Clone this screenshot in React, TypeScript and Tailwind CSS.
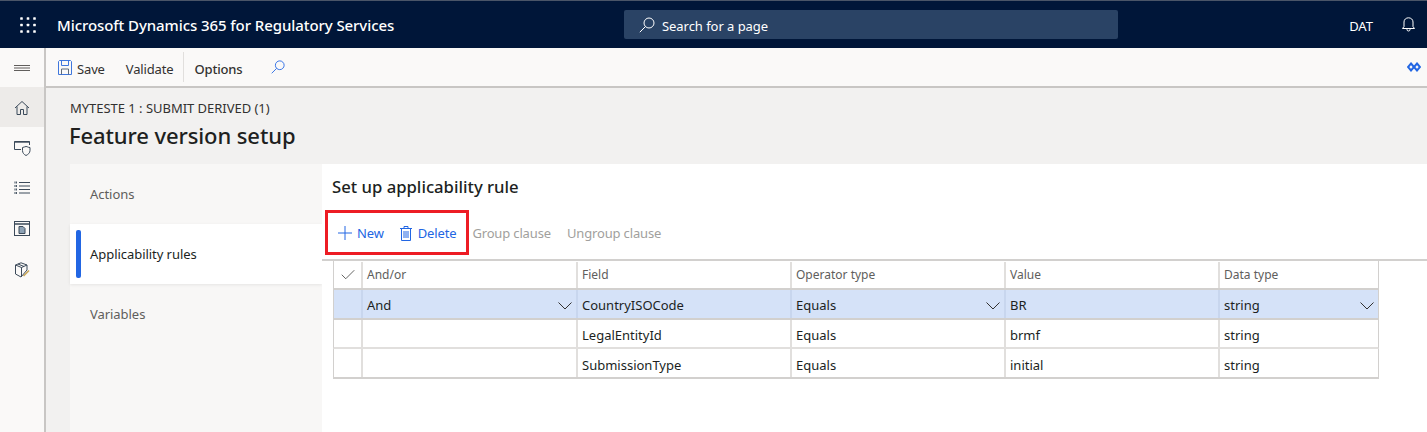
import { Check } from 'lucide-react'

const font = "font-['Noto_Sans','Open_Sans',sans-serif]"

const rows = [
  { andOr: 'And', field: 'CountryISOCode', op: 'Equals', value: 'BR', type: 'string', selected: true, h: 'h-[30px]', pt: 'pt-[3px]' },
  { andOr: '', field: 'LegalEntityId', op: 'Equals', value: 'brmf', type: 'string', selected: false, h: 'h-[29px]', pt: 'pt-[5px]' },
  { andOr: '', field: 'SubmissionType', op: 'Equals', value: 'initial', type: 'string', selected: false, h: 'h-[30px]', pt: 'pt-[5px]' },
]

const colClass = 'grid grid-cols-[27px_215px_214px_214px_214px_160px]'

function HomeIcon() {
  return (
    <svg width="16" height="16" viewBox="0 0 16 16" fill="none" stroke="#3b4a5a" strokeWidth="1">
      <path d="M1 8 8 1.5 15 8" />
      <path d="M3 6.500V14.500H6.500V9.500H9.500V14.500H13V6.500" />
    </svg>
  )
}

function ShieldIcon() {
  return (
    <svg width="17" height="16" viewBox="0 0 17 16" fill="none" stroke="#3b4a5a" strokeWidth="1">
      <path d="M7 9.500H.5V1.500H15.500V5" />
      <path d="M.5 2H15.500" strokeWidth="1.400" />
      <path d="M8.500 7.500C10 7.500 10.500 6.500 12 6.500S14 7.500 16 7.500V10.500C16 13 14 14.500 12 15.500 10 14.500 8.500 13 8.500 10.500Z" fill="#faf9f8" />
    </svg>
  )
}

function ListIcon() {
  return (
    <svg width="16" height="14" viewBox="0 0 16 14" fill="none" stroke="#3b4a5a" strokeWidth="1">
      <path d="M5 1.500H16M5 5H16M5 8.500H16M5 12H16" />
      <path d="M.5 1.500H3M.5 5H3M.5 8.500H3M.5 12H3" strokeDasharray="1 .6" strokeWidth="2" />
    </svg>
  )
}

function ReportIcon() {
  return (
    <svg width="16" height="15" viewBox="0 0 16 15" fill="none" stroke="#3b4a5a" strokeWidth="1">
      <rect x=".5" y=".5" width="15" height="14" />
      <path d="M.5 3H15.500" strokeWidth="1.500" />
      <path d="M5 12.500V5.500H9L11 7.500V12.500Z" fill="#8da2b5" />
    </svg>
  )
}

function PackageIcon() {
  return (
    <svg width="16" height="16" viewBox="0 0 16 16" fill="none" stroke="#3b4a5a" strokeWidth="1">
      <path d="M7 .8 13 3V8L7 15 1.500 12V3Z" />
      <path d="M1.500 3 7.500 5.500 13 3M7.500 5.500V14.500M4 2 10 4.500" />
      <path d="M9.500 14 15 8.500" stroke="#c8a656" strokeWidth="1.600" />
    </svg>
  )
}

function SaveIcon() {
  return (
    <svg width="14" height="15" viewBox="0 0 14 15" fill="none" stroke="#3f77dd" strokeWidth="1">
      <path d="M1.500.5H12.500L13.500 1.500V14.500H.5V1.500Z" />
      <path d="M3.500.5V5.500H10.500V.5" />
      <path d="M3.500 14.500V9H10.500V14.500" stroke="#5f6b7a" />
    </svg>
  )
}

function PlusIcon() {
  return (
    <svg width="14" height="14" viewBox="0 0 14 14" fill="none" stroke="#2266e3" strokeWidth="1">
      <path d="M7 0V14M0 7H14" />
    </svg>
  )
}

function TrashIcon() {
  return (
    <svg width="12" height="15" viewBox="0 0 12 15" fill="none" stroke="#2266e3" strokeWidth="1">
      <path d="M0 2.500H12M4 2.500V.5H8V2.500" />
      <path d="M1.500 2.500V14.500H10.500V2.500" />
      <path d="M4 5V12M6 5V12M8 5V12" />
    </svg>
  )
}

function Chevron() {
  return (
    <svg width="14" height="8" viewBox="0 0 14 8" fill="none" stroke="#323130" strokeWidth="1" className="mr-[4px]">
      <path d="M.5.5 7 7 13.500.5" />
    </svg>
  )
}

function SearchGlass({ color, size }: { color: string; size: number }) {
  return (
    <svg width={size} height={size} viewBox="0 0 16 16" fill="none" stroke={color} strokeWidth="1">
      <circle cx="10" cy="6" r="5" />
      <path d="M6.500 9.500 .8 15.200" />
    </svg>
  )
}

function Waffle() {
  return (
    <svg width="16" height="16" viewBox="0 0 16 16" fill="#fff">
      {[1.5, 8, 14.5].map((y) =>
        [1.5, 8, 14.5].map((x) => <rect key={`${x}-${y}`} x={x - 1.3} y={y - 1.3} width="2.6" height="2.6" rx=".6" />),
      )}
    </svg>
  )
}

function BellIcon() {
  return (
    <svg width="13" height="15" viewBox="0 0 13 15" fill="none" stroke="#fff" strokeWidth="1">
      <path d="M.5 11.500H12.500L11 9.500V5C11 2.500 9 .8 6.500 .8S2 2.500 2 5V9.500Z" />
      <path d="M5 12V12.500A1.500 1.500 0 0 0 8 12.500V12" />
    </svg>
  )
}

function DiamondsIcon() {
  return (
    <svg width="14" height="10" viewBox="0 0 14 10" fill="none" stroke="#2266e3" strokeWidth="2">
      <path d="M4 1.500 7 5 4 8.500 1 5Z" />
      <path d="M10 1.500 13 5 10 8.500 7 5Z" />
    </svg>
  )
}

function Cell({ children, className = '' }: { children?: React.ReactNode; className?: string }) {
  return <div className={`flex items-center justify-between pl-[4px] ${className}`}>{children}</div>
}

export default function App() {
  return (
    <div className={`flex h-[432px] w-[1427px] flex-col overflow-hidden bg-[#f2f1f0] text-[#201f1e] ${font}`}>
      <header className="flex h-[48px] shrink-0 items-center border-t border-[#4a5568] bg-[#001639] text-white">
        <div className="flex w-[57px] justify-center pr-[1px]">
          <Waffle />
        </div>
        <div className="w-[567px] pt-[2px] text-[15px] font-medium tracking-[-0.08px]">Microsoft Dynamics 365 for Regulatory Services</div>
        <div className="flex h-[29px] w-[494px] items-center gap-[7px] rounded-[2px] bg-[#2a4365] pl-[15px] text-[13px]">
          <SearchGlass color="#fff" size={16} />
          <span className="pt-[5px] tracking-[-0.05px]">Search for a page</span>
        </div>
        <div className="ml-auto flex items-center">
          <span className="mr-[29px] pt-[4px] text-[13px]">DAT</span>
          <span className="mr-[12px] flex">
            <BellIcon />
          </span>
        </div>
      </header>

      <div className="flex min-h-0 flex-1">
        <nav className="flex w-[46px] shrink-0 flex-col border-r-2 border-[#c8c6c4] bg-[#faf9f8]">
          <div className="flex h-[39px] items-center justify-center">
            <div className="h-[6px] w-[16px] border-y border-[#605e5c] after:block after:h-[1px] after:translate-y-[1.500px] after:bg-[#605e5c]" />
          </div>
          <div className="flex h-[40px] w-[44px] items-center justify-center bg-[#edebe9] pt-[2px]">
            <HomeIcon />
          </div>
          <div className="flex h-[40px] w-[44px] items-center justify-center pt-[2px]">
            <ShieldIcon />
          </div>
          <div className="flex h-[40px] w-[44px] items-center justify-center pt-[2px]">
            <ListIcon />
          </div>
          <div className="flex h-[41px] w-[44px] items-center justify-center pt-[2px]">
            <ReportIcon />
          </div>
          <div className="flex h-[41px] w-[44px] items-center justify-center pt-[2px]">
            <PackageIcon />
          </div>
        </nav>

        <div className="flex min-w-0 flex-1 flex-col">
          <div className="flex h-[40px] shrink-0 items-center border-b-2 border-[#c8c6c4] bg-[#faf9f8] text-[13px] tracking-[-0.15px] text-[#323130]">
            <span className="ml-[12px] flex">
              <SaveIcon />
            </span>
            <span className="ml-[5px] pt-[6px]">Save</span>
            <span className="ml-[21px] pt-[6px] pr-[10px]">Validate</span>
            <span className="h-[30px] w-px bg-[#e1dfdd]" />
            <span className="ml-[10px] pt-[6px] font-medium">Options</span>
            <span className="ml-[28px] flex">
              <SearchGlass color="#2266e3" size={14} />
            </span>
            <span className="mr-[6px] ml-auto flex">
              <DiamondsIcon />
            </span>
          </div>

          <div className="flex min-h-0 flex-1 flex-col pl-[24px]">
            <div className="mt-[11px] text-[13px] leading-[18px] tracking-[-0.03px] text-[#323130]">MYTESTE 1 : SUBMIT DERIVED (1)</div>
            <h1 className="mt-[3px] -ml-[1px] text-[22px] leading-[30px] font-medium tracking-[-0.1px]">Feature version setup</h1>

            <div className="mt-[14px] flex min-h-0 flex-1">
              <aside className="w-[252px] shrink-0 bg-[#f8f7f6] text-[13px] tracking-[-0.05px]">
                <div className="flex h-[60px] items-center pt-[2px] pl-[20px] text-[#605e5c]">Actions</div>
                <div className="flex h-[60px] items-center bg-white pl-[6px] shadow-[0_1px_3px_rgba(0,0,0,0.08)]">
                  <span className="h-[48px] w-[5px] rounded-[2px] bg-[#2266e3]" />
                  <span className="ml-[9px] pt-[2px]">Applicability rules</span>
                </div>
                <div className="flex h-[60px] items-center pt-[2px] pl-[20px] text-[#605e5c]">Variables</div>
              </aside>

              <section className="relative min-w-0 flex-1 bg-white">
                <h2 className="mt-[12px] ml-[10px] text-[16.700px] leading-[22px] font-medium">Set up applicability rule</h2>

                <div className="mt-[17px] flex h-[36px] items-center text-[13px] tracking-[-0.15px]">
                  <span className="ml-[16px] flex">
                    <PlusIcon />
                  </span>
                  <span className="ml-[5px] pt-[2px] text-[#2266e3]">New</span>
                  <span className="ml-[16px] flex">
                    <TrashIcon />
                  </span>
                  <span className="ml-[6px] pt-[2px] text-[#2266e3]">Delete</span>
                  <span className="ml-[16px] pt-[2px] text-[#a19f9d]">Group clause</span>
                  <span className="ml-[16px] pt-[2px] text-[#a19f9d]">Ungroup clause</span>
                </div>

                {/* red callout over the toolbar */}
                <div className="absolute top-[46px] left-[3px] h-[45px] w-[144px] border-[3px] border-[#ed1c24]" />

                <div className="mt-[8px] border-t-2 border-[#d2d0ce]">
                  <div className="ml-[11px] w-[1046px] text-[13px]">
                    <div className={`${colClass} h-[29px] border-x border-b-2 border-[#d2d0ce] pt-[1px] text-[12px] text-[#605e5c] [&>*+*]:border-l-2 [&>*+*]:border-[#e1dfdd]`}>
                      <div className="flex items-center justify-center text-[#323130]">
                        <Check size={18} strokeWidth={1} />
                      </div>
                      <Cell>And/or</Cell>
                      <Cell>Field</Cell>
                      <Cell>Operator type</Cell>
                      <Cell>Value</Cell>
                      <Cell>Data type</Cell>
                    </div>
                    {rows.map((r) => (
                      <div
                        key={r.field}
                        className={`${colClass} ${r.h} border-x border-b-2 border-[#d2d0ce] [&>*+*]:border-l-2 ${
                          r.selected ? 'bg-[#d5e2f8] [&>*+*]:border-[#c8d6ee]' : 'border-b-[#e1dfdd] [&>*+*]:border-[#e1dfdd] last:border-b-[#d2d0ce]'
                        }`}
                      >
                        <div />
                        <Cell className={r.pt}>
                          {r.andOr}
                          {r.selected && <Chevron />}
                        </Cell>
                        <Cell className={r.pt}>{r.field}</Cell>
                        <Cell className={r.pt}>
                          {r.op}
                          {r.selected && <Chevron />}
                        </Cell>
                        <Cell className={r.pt}>{r.value}</Cell>
                        <Cell className={r.pt}>
                          {r.type}
                          {r.selected && <Chevron />}
                        </Cell>
                      </div>
                    ))}
                  </div>
                </div>
              </section>
            </div>
          </div>
        </div>
      </div>
    </div>
  )
}
